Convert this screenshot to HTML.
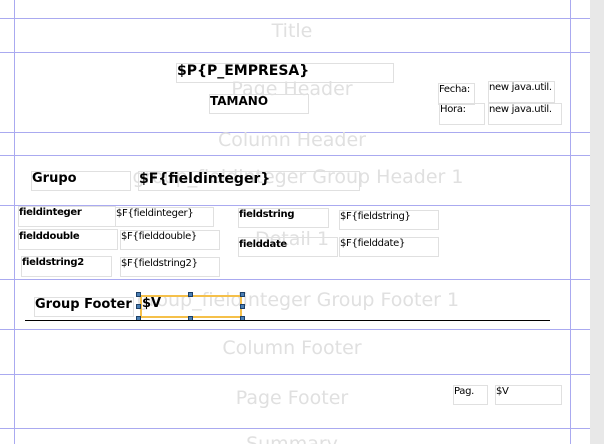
<!DOCTYPE html>
<html style="height:444px;overflow:hidden"><head><style>
body{margin:0;width:604px;height:444px;overflow:hidden;background:#fff;position:relative;font-family:"DejaVu Sans","Liberation Sans",sans-serif;}
.h{position:absolute;left:0;width:590px;height:1px;background:#aaaaf0;}
.v{position:absolute;top:0;height:444px;width:1px;background:#aaaaf0;}
.bl{position:absolute;left:14px;width:556px;text-align:center;color:#e0e0e0;font-size:19px;}
.b{position:absolute;border:1px solid #e0e0e0;box-sizing:border-box;color:#000;white-space:nowrap;overflow:visible;}
.bold{font-weight:bold;}
.s{font-size:10px;letter-spacing:-0.3px;}
.hd{position:absolute;width:5px;height:5px;background:#4a7fb5;border:1px solid #1d3f66;box-sizing:border-box;}
</style></head><body>
<div style="position:absolute;left:590px;top:0;width:14px;height:444px;background:#e8e8e8;"></div>
<div class="v" style="left:14px"></div>
<div class="v" style="left:570px"></div>
<div class="h" style="top:18px"></div>
<div class="h" style="top:52px"></div>
<div class="h" style="top:132px"></div>
<div class="h" style="top:155px"></div>
<div class="h" style="top:205px"></div>
<div class="h" style="top:279px"></div>
<div class="h" style="top:329px"></div>
<div class="h" style="top:374px"></div>
<div class="h" style="top:428px"></div>

<div class="bl" style="top:20px">Title</div>
<div class="bl" style="top:78px">Page Header</div>
<div class="bl" style="top:129px">Column Header</div>
<div class="bl" style="top:166px;left:20px;width:556px">group_fieldinteger Group Header 1</div>
<div class="bl" style="top:228px">Detail 1</div>
<div class="bl" style="top:289px;left:20px;width:556px">group_fieldinteger Group Footer 1</div>
<div class="bl" style="top:337px">Column Footer</div>
<div class="bl" style="top:387px">Page Footer</div>
<div class="bl" style="top:433px">Summary</div>

<div class="b bold" style="left:176px;top:63px;width:218px;height:20px;font-size:14px;line-height:15px">$P{P_EMPRESA}</div>
<div class="b bold" style="left:209px;top:94px;width:100px;height:20px;font-size:12px;line-height:13px">TAMANO</div>
<div class="b s" style="left:438px;top:83px;width:37px;height:22px;line-height:12px">Fecha:</div>
<div class="b s" style="left:488px;top:81px;width:67px;height:22px;line-height:12px">new java.util.</div>
<div class="b s" style="left:439px;top:103px;width:46px;height:22px;line-height:12px">Hora:</div>
<div class="b s" style="left:488px;top:103px;width:74px;height:22px;line-height:12px">new java.util.</div>

<div class="b bold" style="left:31px;top:171px;width:100px;height:20px;font-size:13px;line-height:14px">Grupo</div>
<div class="b bold" style="left:138px;top:171px;width:222px;height:20px;font-size:14px;line-height:15px">$F{fieldinteger}</div>

<div class="b bold s" style="left:18px;top:206px;width:98px;height:21px;line-height:12px">fieldinteger</div>
<div class="b s" style="left:115px;top:207px;width:99px;height:20px;line-height:12px">$F{fieldinteger}</div>
<div class="b bold s" style="left:18px;top:229px;width:100px;height:21px;line-height:13px">fielddouble</div>
<div class="b s" style="left:120px;top:230px;width:100px;height:20px;line-height:12px">$F{fielddouble}</div>
<div class="b bold s" style="left:21px;top:256px;width:91px;height:21px;line-height:12px">fieldstring2</div>
<div class="b s" style="left:120px;top:257px;width:100px;height:20px;line-height:12px">$F{fieldstring2}</div>
<div class="b bold s" style="left:238px;top:208px;width:91px;height:20px;line-height:12px">fieldstring</div>
<div class="b s" style="left:339px;top:210px;width:100px;height:20px;line-height:12px">$F{fieldstring}</div>
<div class="b bold s" style="left:238px;top:237px;width:100px;height:20px;line-height:13px">fielddate</div>
<div class="b s" style="left:339px;top:237px;width:100px;height:20px;line-height:12px">$F{fielddate}</div>

<div class="b bold" style="left:34px;top:297px;width:100px;height:20px;font-size:13px;line-height:14px">Group Footer</div>
<div style="position:absolute;left:140px;top:295px;width:102px;height:23px;border:2px solid #f5c04a;box-sizing:border-box;font-weight:bold;font-size:13px;line-height:14px">$V</div>
<div class="hd" style="left:136px;top:292px"></div><div class="hd" style="left:188px;top:292px"></div><div class="hd" style="left:240px;top:292px"></div>
<div class="hd" style="left:136px;top:304px"></div><div class="hd" style="left:240px;top:304px"></div>
<div class="hd" style="left:136px;top:316px"></div><div class="hd" style="left:188px;top:316px"></div><div class="hd" style="left:240px;top:316px"></div>
<div style="position:absolute;left:25px;top:320px;width:525px;height:1px;background:#000"></div>

<div class="b s" style="left:453px;top:385px;width:35px;height:20px;line-height:12px">Pag.</div>
<div class="b s" style="left:495px;top:385px;width:67px;height:20px;line-height:12px">$V</div>
</body></html>
